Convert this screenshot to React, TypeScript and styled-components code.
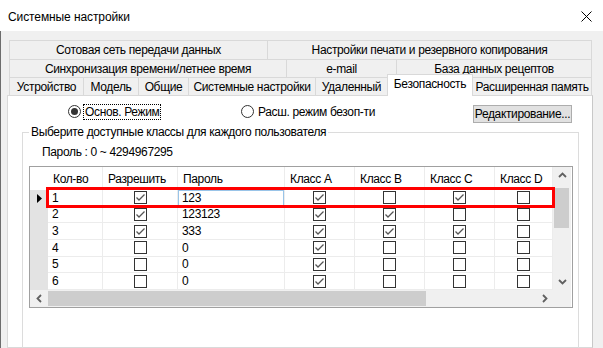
import React from 'react'
import styled, { createGlobalStyle, css } from 'styled-components'

const GlobalStyle = createGlobalStyle`
  html, body { margin: 0; padding: 0; background: #f0f0f0; }
  body {
    font-family: 'Liberation Sans', 'Noto Sans', sans-serif;
    font-size: 12px;
    letter-spacing: -0.35px;
    color: #000;
  }
  * { box-sizing: border-box; }
`

const Window = styled.div`
  width: 603px;
  height: 348px;
  overflow: hidden;
  display: flex;
  flex-direction: column;
  background: #f0f0f0;
`

const TitleBar = styled.div`
  height: 31px;
  flex: none;
  background: #fff;
  display: flex;
  align-items: center;
  justify-content: space-between;
  padding: 2px 11px 0 8px;
  letter-spacing: -0.1px;
`

const Body = styled.div`
  flex: 1;
  min-height: 0;
  display: flex;
  flex-direction: column;
  border-left: 1px solid #6d6d6d;
  padding: 9px 10px 0 6px;
`

const TabStrip = styled.div`
  display: flex;
  flex-direction: column;
  padding: 0 1px 0 2px;
`

const TabRow = styled.div<{ $h: number }>`
  display: flex;
  height: ${p => p.$h}px;
`

const Tab = styled.div<{ $w: number; $active?: boolean }>`
  width: ${p => p.$w}px;
  flex: none;
  display: flex;
  align-items: center;
  justify-content: center;
  white-space: nowrap;
  border-top: 1px solid #d9d9d9;
  border-left: 1px solid #d9d9d9;
  &:last-child { border-right: 1px solid #d9d9d9; }
  ${p => p.$active && css`
    background: #fff;
    margin-top: -3px;
    margin-right: -1px;
    height: calc(100% + 4px);
    border-right: 1px solid #d9d9d9;
    padding-bottom: 3px;
    position: relative;
    z-index: 1;
  `}
`

const Panel = styled.div`
  flex: 1;
  min-height: 0;
  background: #fff;
  border: 1px solid #d9d9d9;
  border-right-color: #c8c8c8;
  display: flex;
  flex-direction: column;
`

const TopRow = styled.div`
  display: flex;
  align-items: flex-start;
  margin-top: 9px;
  padding-left: 60px;
  height: 18px;
`

const RadioOption = styled.label<{ $w: number }>`
  width: ${p => p.$w}px;
  flex: none;
  display: flex;
  align-items: center;
  gap: 3px;
  height: 13px;
  white-space: nowrap;
`

const RadioCircle = styled.span<{ $on?: boolean }>`
  width: 13px;
  height: 13px;
  flex: none;
  border-radius: 50%;
  border: 1px solid #333;
  background: #fff;
  display: flex;
  align-items: center;
  justify-content: center;
  &::after {
    content: '';
    width: 7px;
    height: 7px;
    border-radius: 50%;
    background: #333;
    display: ${p => (p.$on ? 'block' : 'none')};
  }
`

const RadioText = styled.span<{ $focus?: boolean }>`
  line-height: 14px;
  padding: 0 1px;
  ${p => p.$focus && css`outline: 1px dotted #000;`}
`

const Button = styled.button`
  width: 99px;
  height: 18px;
  flex: none;
  background: #e1e1e1;
  border: 1px solid #adadad;
  font: inherit;
  letter-spacing: inherit;
  padding: 0;
  display: flex;
  align-items: center;
  justify-content: center;
  overflow: hidden;
  white-space: nowrap;
`

const Group = styled.fieldset`
  margin: 2px 13px 0 14px;
  padding: 0;
  border: 1px solid #dcdcdc;
  min-height: 300px;
`

const GroupLegend = styled.legend`
  margin-left: 6px;
  padding: 0 2px;
  line-height: 14px;
`

const RangeNote = styled.div`
  margin: 6px 0 0 19px;
  line-height: 14px;
`

const DataGrid = styled.div`
  position: relative;
  margin: 7px 0 0 6px;
  width: 544px;
  border: 1px solid #a0a0a0;
  display: grid;
  grid-template-columns: 18px 55px 75px 107px 70px 70px 70px 58px 18px;
  grid-template-rows: 23px repeat(6, 16.667px) 17px;
`

const HeaderCell = styled.div`
  background: #fff;
  border-right: 1px solid #ececec;
  display: flex;
  align-items: center;
  padding-left: 5px;
  white-space: nowrap;
  overflow: hidden;
`

const Corner = styled.div`
  background: #fff;
`

const RowHead = styled.div`
  background: #e3e3e3;
  display: flex;
  align-items: center;
  padding-left: 7px;
`

const Cell = styled.div<{ $center?: boolean; $editing?: boolean }>`
  border-right: 1px solid #ececec;
  border-bottom: 1px solid #ececec;
  display: flex;
  align-items: center;
  justify-content: ${p => (p.$center ? 'center' : 'flex-start')};
  padding-left: ${p => (p.$center ? 0 : 4)}px;
  white-space: nowrap;
  overflow: hidden;
  ${p => p.$editing && css`box-shadow: inset 0 0 0 1px #99c4e8;`}
`

const Box = styled.span`
  width: 13px;
  height: 13px;
  border: 1px solid #333;
  background: #fff;
  display: flex;
  align-items: center;
  justify-content: center;
`

const VScroll = styled.div`
  grid-column: 9;
  grid-row: 1 / 8;
  background: #f0f0f0;
  display: flex;
  flex-direction: column;
`

const HScroll = styled.div`
  grid-column: 1 / 9;
  grid-row: 8;
  background: #f0f0f0;
  display: flex;
`

const ScrollCorner = styled.div`
  grid-column: 9;
  grid-row: 8;
  background: #f0f0f0;
`

const ArrowBtn = styled.div<{ $w: number; $h: number }>`
  width: ${p => p.$w}px;
  height: ${p => p.$h}px;
  flex: none;
  display: flex;
  align-items: center;
  justify-content: center;
`

const VThumb = styled.div`
  margin: 4px 2px 0 1px;
  height: 40px;
  background: #cdcdcd;
`

const HThumb = styled.div`
  margin: 1px 0;
  width: 378px;
  background: #cdcdcd;
`

const Spacer = styled.div`
  flex: 1;
`

const Highlight = styled.div`
  position: absolute;
  left: 16px;
  top: 20px;
  width: 509px;
  height: 21px;
  border: 3px solid #ff0000;
  pointer-events: none;
`

const Check = () => (
  <svg width='11' height='11' viewBox='0 0 11 11'>
    <polyline points='1.5,5.5 4,8 9.5,2.5' fill='none' stroke='#555' strokeWidth='1.3' />
  </svg>
)

const CheckBox = ({ on }: { on: boolean }) => <Box>{on && <Check />}</Box>

const Chevron = ({ dir }: { dir: 'up' | 'down' | 'left' | 'right' }) => {
  const pts = {
    up: '1,6 4.5,2.5 8,6',
    down: '1,3 4.5,6.5 8,3',
    left: '6,1 2.5,4.5 6,8',
    right: '3,1 6.5,4.5 3,8',
  }[dir]
  return (
    <svg width='9' height='9' viewBox='0 0 9 9'>
      <polyline points={pts} fill='none' stroke='#606060' strokeWidth='1.8' />
    </svg>
  )
}

const tabRows = [
  { h: 19, tabs: [['Сотовая сеть передачи данных', 258], ['Настройки печати и резервного копирования', 325]] },
  { h: 18, tabs: [['Синхронизация времени/летнее время', 277], ['e-mail', 110], ['База данных рецептов', 196]] },
  {
    h: 18,
    tabs: [
      ['Устройство', 74], ['Модель', 55], ['Общие', 50], ['Системные настройки', 127],
      ['Удаленный', 72], ['Безопасность', 86], ['Расширенная память', 120],
    ],
  },
] as { h: number; tabs: [string, number][] }[]

const columns = ['Кол-во', 'Разрешить', 'Пароль', 'Класс A', 'Класс B', 'Класс C', 'Класс D']

const users = [
  { n: '1', allow: true, pass: '123', cls: [true, false, true, false] },
  { n: '2', allow: true, pass: '123123', cls: [true, true, false, false] },
  { n: '3', allow: true, pass: '333', cls: [true, true, true, false] },
  { n: '4', allow: false, pass: '0', cls: [true, false, false, false] },
  { n: '5', allow: false, pass: '0', cls: [true, false, false, false] },
  { n: '6', allow: false, pass: '0', cls: [true, false, false, false] },
]

export default function App() {
  return (
    <Window>
      <GlobalStyle />
      <TitleBar>
        <span>Системные настройки</span>
        <svg width='11' height='11' viewBox='0 0 11 11'>
          <path d='M0.5 0.5 L10.5 10.5 M10.5 0.5 L0.5 10.5' stroke='#000' strokeWidth='1' />
        </svg>
      </TitleBar>
      <Body>
        <TabStrip>
          {tabRows.map((row, i) => (
            <TabRow key={i} $h={row.h}>
              {row.tabs.map(([label, w]) => (
                <Tab key={label} $w={w} $active={label === 'Безопасность'}>{label}</Tab>
              ))}
            </TabRow>
          ))}
        </TabStrip>
        <Panel>
          <TopRow>
            <RadioOption $w={173}>
              <RadioCircle $on />
              <RadioText $focus>Основ. Режим</RadioText>
            </RadioOption>
            <RadioOption $w={232}>
              <RadioCircle />
              <RadioText>Расш. режим безоп-ти</RadioText>
            </RadioOption>
            <Button>Редактирование...</Button>
          </TopRow>
          <Group>
            <GroupLegend>Выберите доступные классы для каждого пользователя</GroupLegend>
            <RangeNote>Пароль : 0 ~ 4294967295</RangeNote>
            <DataGrid>
              <Corner />
              {columns.map(c => <HeaderCell key={c}>{c}</HeaderCell>)}
              <VScroll>
                <ArrowBtn $w={18} $h={17}><Chevron dir='up' /></ArrowBtn>
                <VThumb />
                <Spacer />
                <ArrowBtn $w={18} $h={17}><Chevron dir='down' /></ArrowBtn>
              </VScroll>
              {users.map((u, i) => (
                <React.Fragment key={u.n}>
                  <RowHead>
                    {i === 0 && (
                      <svg width='5' height='9' viewBox='0 0 5 9'>
                        <polygon points='0,0 5,4.5 0,9' fill='#000' />
                      </svg>
                    )}
                  </RowHead>
                  <Cell>{u.n}</Cell>
                  <Cell $center><CheckBox on={u.allow} /></Cell>
                  <Cell $editing={i === 0}>{u.pass}</Cell>
                  {u.cls.map((on, k) => (
                    <Cell key={k} $center><CheckBox on={on} /></Cell>
                  ))}
                </React.Fragment>
              ))}
              <HScroll>
                <ArrowBtn $w={18} $h={17}><Chevron dir='left' /></ArrowBtn>
                <HThumb />
                <Spacer />
                <ArrowBtn $w={17} $h={17}><Chevron dir='right' /></ArrowBtn>
              </HScroll>
              <ScrollCorner />
              <Highlight />
            </DataGrid>
          </Group>
        </Panel>
      </Body>
    </Window>
  )
}
